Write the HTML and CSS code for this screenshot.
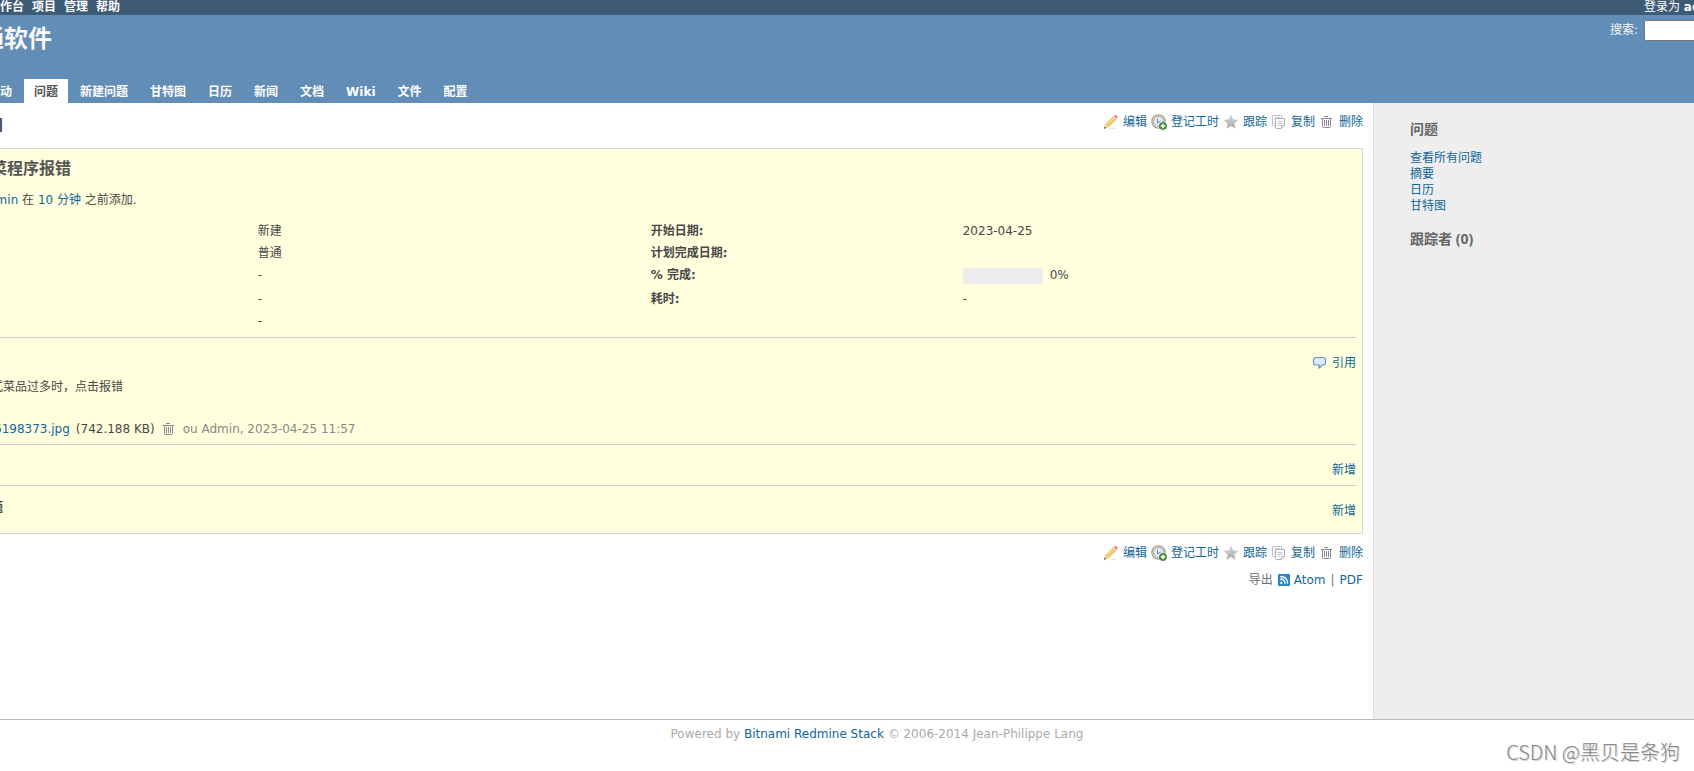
FILE: index.html
```
<!DOCTYPE html>
<html lang="zh-CN">
<head>
<meta charset="utf-8">
<title>Redmine</title>
<link rel="stylesheet" href="styles.css">
</head>
<body>
<svg class="defs" aria-hidden="true">
  <defs>
    <linearGradient id="pen" x1="0" y1="0" x2="1" y2="1"><stop offset="0.3" stop-color="#fff0a0"/><stop offset="0.7" stop-color="#e8ad3c"/></linearGradient>
    <linearGradient id="grey" x1="0" y1="0" x2="0" y2="1"><stop offset="0" stop-color="#d8d8d8"/><stop offset="1" stop-color="#a8a8a8"/></linearGradient>
    <symbol id="i-edit" viewBox="0 0 16 16">
      <path d="M4 15 12 13.500 14 14.500 8 15.500z" fill="#e4e4e4"/>
      <path d="M2.600 10.200 10.300 2.500 13.100 5.300 5.200 13 1.500 14.300z" fill="url(#pen)" stroke="#d0a352" stroke-width=".6"/>
      <path d="M10.900 2.100 11.900 1.200Q12.600.7 13.300 1.300L14.300 2.400Q14.900 3.100 14.400 3.800L13.500 4.700z" fill="#ee6f70"/>
      <path d="M10 3 10.900 2.100 13.500 4.700 12.600 5.600z" fill="#d8d8d8"/>
      <path d="M2.500 10.700 4.800 13 1.400 14.400z" fill="#f3d9b4"/>
      <path d="M1.800 12.600 3 13.900 1 14.800z" fill="#444"/>
    </symbol>
    <symbol id="i-time" viewBox="0 0 16 16">
      <circle cx="7.500" cy="7.500" r="6.600" fill="#fff" stroke="#b39a76" stroke-width="1.300"/>
      <circle cx="7.500" cy="7.500" r="4.900" fill="#e8f1fa" stroke="#88a3c0" stroke-width="1"/>
      <path d="M6.500 4.800V9L9.700 7" fill="none" stroke="#6d819a" stroke-width="1"/>
      <circle cx="12" cy="12" r="3.600" fill="#4b9838" stroke="#2f7124" stroke-width=".7"/>
      <path d="M12 9.800V14.200M9.800 12H14.200" stroke="#fff" stroke-width="1.400"/>
    </symbol>
    <symbol id="i-star" viewBox="0 0 16 16">
      <path d="M8 1.500 9.900 5.800 14.700 6.200 11.100 9.400 12.200 14.200 8 11.700 3.800 14.200 4.900 9.400 1.300 6.200 6.100 5.800z" fill="url(#grey)" stroke="#bdbdbd" stroke-width=".6"/>
    </symbol>
    <symbol id="i-copy" viewBox="0 0 16 16">
      <path d="M4.500 11.500H2.500Q1.500 11.500 1.500 10.500V2.500Q1.500 1.500 2.500 1.500H9.500Q10.500 1.500 10.500 2.500V4" fill="#fff" stroke="#bcbcc2"/>
      <path d="M3 3.500H9M3 5.500H5M3 7.500H5M3 9.500H5" stroke="#d4d4da"/>
      <path d="M4.500 4.500H13.500V11.500L10.500 14.500H5.500Q4.500 14.500 4.500 13.500z" fill="#fff" stroke="#b0b0b8"/>
      <path d="M6.500 7.500H11.500M6.500 9.500H11.500M6.500 11.500H9.500M10.500 14V11.500H13" fill="none" stroke="#c4c4ca"/>
    </symbol>
    <symbol id="i-trash" viewBox="0 0 16 16">
      <path d="M5 2.500H9M2 4.500H13M3.500 5V12.500Q3.500 13.500 4.500 13.500H10.500Q11.500 13.500 11.500 12.500V5" fill="none" stroke="#8c8996"/>
      <path d="M5.500 6V12M7.500 6V12M9.500 6V12" stroke="#8c8996"/>
    </symbol>
    <symbol id="i-quote" viewBox="0 0 16 16">
      <path d="M4 2.500H11Q13.500 2.500 13.500 5V7.500Q13.500 10 11 10H9.800Q9.500 12.300 6.800 12.800 7.700 11.300 7.300 10H4Q1.500 10 1.500 7.500V5Q1.500 2.500 4 2.500z" fill="#dcebff" stroke="#6d8fc4" stroke-width="1.200"/>
    </symbol>
    <symbol id="i-feed" viewBox="0 0 12 12">
      <rect width="12" height="12" rx="1" fill="#2b86c9"/>
      <circle cx="3.300" cy="8.700" r="1.200" fill="#fff"/>
      <path d="M2.200 5Q7 5 7 9.800M2.200 2.500Q9.600 2.500 9.600 9.800" fill="none" stroke="#fff" stroke-width="1.300"/>
    </symbol>
  </defs>
</svg>

<nav class="top-menu">
  <ul class="top-links">
    <li><a href="#">作台</a></li><li><a href="#">项目</a></li><li><a href="#">管理</a></li><li><a href="#">帮助</a></li>
  </ul>
  <div class="account">登录为 <a href="#">admin</a></div>
</nav>

<header class="header">
  <div class="header-row">
    <h1>通软件</h1>
    <form class="search"><label for="q">搜索:</label><input id="q" type="text"></form>
  </div>
  <nav>
    <ul class="tabs">
      <li><a href="#">活动</a></li><li><a class="selected" href="#">问题</a></li><li><a href="#">新建问题</a></li><li><a href="#">甘特图</a></li><li><a href="#">日历</a></li><li><a href="#">新闻</a></li><li><a href="#">文档</a></li><li><a href="#">Wiki</a></li><li><a href="#">文件</a></li><li><a href="#">配置</a></li>
    </ul>
  </nav>
</header>

<div class="main">
  <main class="content">
    <div class="heading">
      <h2>H</h2>
      <div class="contextual">
        <a href="#"><svg><use href="#i-edit"/></svg>编辑</a>
        <a href="#"><svg><use href="#i-time"/></svg>登记工时</a>
        <a href="#"><svg><use href="#i-star"/></svg>跟踪</a>
        <a href="#"><svg><use href="#i-copy"/></svg>复制</a>
        <a href="#"><svg><use href="#i-trash"/></svg>删除</a>
      </div>
    </div>

    <article class="issue">
      <h3 class="subject">菜程序报错</h3>
      <p class="author"><a href="#">Admin</a> 在 <a href="#">10 分钟</a> 之前添加.</p>
      <table class="attributes">
        <tr><th></th><td>新建</td><th>开始日期:</th><td>2023-04-25</td></tr>
        <tr><th></th><td>普通</td><th>计划完成日期:</th><td></td></tr>
        <tr class="tall"><th></th><td>-</td><th>% 完成:</th><td><div class="done"><span class="bar"></span>0%</div></td></tr>
        <tr><th></th><td>-</td><th>耗时:</th><td>-</td></tr>
        <tr><th></th><td>-</td><th></th><td></td></tr>
      </table>
      <section class="description">
        <div class="contextual"><a href="#"><svg><use href="#i-quote"/></svg>引用</a></div>
        <p class="text">式菜品过多时，点击报错</p>
        <p class="attachment"><a href="#">6198373.jpg</a> (742.188 KB) <a class="remove" href="#" aria-label="删除"><svg><use href="#i-trash"/></svg></a> <span class="by">ou Admin, 2023-04-25 11:57</span></p>
      </section>
      <section class="tasks"><div class="contextual"><a href="#">新增</a></div></section>
      <section class="relations"><strong>题</strong><div class="contextual"><a href="#">新增</a></div></section>
    </article>

    <div class="contextual below">
      <a href="#"><svg><use href="#i-edit"/></svg>编辑</a>
      <a href="#"><svg><use href="#i-time"/></svg>登记工时</a>
      <a href="#"><svg><use href="#i-star"/></svg>跟踪</a>
      <a href="#"><svg><use href="#i-copy"/></svg>复制</a>
      <a href="#"><svg><use href="#i-trash"/></svg>删除</a>
    </div>
    <p class="formats">导出 <a class="atom" href="#"><svg><use href="#i-feed"/></svg>Atom</a> <span class="sep">|</span> <a href="#">PDF</a></p>
  </main>

  <aside class="sidebar">
    <h3>问题</h3>
    <ul>
      <li><a href="#">查看所有问题</a></li><li><a href="#">摘要</a></li><li><a href="#">日历</a></li><li><a href="#">甘特图</a></li>
    </ul>
    <h3>跟踪者 (0)</h3>
  </aside>
</div>

<footer class="footer">Powered by <a href="#">Bitnami Redmine Stack</a> © 2006-2014 Jean-Philippe Lang</footer>
<div class="watermark">CSDN @黑贝是条狗</div>
</body>
</html>
```
FILE: styles.css
```
* { box-sizing: border-box; }
body {
  margin: 0;
  min-height: 100vh;
  display: flex;
  flex-direction: column;
  overflow: hidden;
  background: #fff;
  color: #484848;
  font: 12px/16px "DejaVu Sans", "Noto Sans CJK SC", sans-serif;
}
h1, h2, h3, p, ul { margin: 0; padding: 0; }
ul { list-style: none; }
a { color: #169; text-decoration: none; }
.defs { position: absolute; width: 0; height: 0; }

.top-menu {
  display: flex;
  justify-content: space-between;
  height: 15px;
  line-height: 14px;
  background: #3e5b76;
  color: #fff;
}
.top-menu a { color: #fff; font-weight: bold; }
.top-links { display: flex; gap: 8px; }
.account { width: 50px; overflow: hidden; white-space: nowrap; }

.header {
  display: flex;
  flex-direction: column;
  justify-content: space-between;
  height: 88px;
  background: #628db6;
  color: #f8f8f8;
}
.header-row { display: flex; justify-content: space-between; overflow: hidden; }
h1 { margin-left: -20px; padding-top: 8px; font-size: 24px; line-height: 32px; }
.search { display: flex; gap: 6px; height: 21px; margin: 5px -100px 0 0; line-height: 20px; }
.search input { width: 150px; padding: 1px 2px; border: 1px solid #767676; border-radius: 2px; background: #fff; }
.tabs { display: flex; gap: 2px; margin-left: -22px; }
.tabs a { display: block; height: 24px; padding: 1px 10px 0; line-height: 24px; color: #fff; font-weight: bold; }
.tabs .selected { background: #fff; color: #555; }

.main { display: flex; flex: 1; }
.content { flex: 1; min-width: 0; padding: 10px 10px 0 0; }
.heading { display: flex; justify-content: space-between; height: 35px; }
h2 { margin-left: -13px; font-size: 20px; line-height: 24px; color: #555; }
.contextual { display: flex; justify-content: flex-end; gap: 4px; line-height: 18px; height: 18px; }
.contextual a { display: flex; align-items: center; gap: 4px; }
.contextual svg { width: 16px; height: 16px; }

.issue { padding: 9px 6px 0 0; border: 1px solid #d7d7d7; border-left: 0; background: #ffffdd; }
.subject { margin-left: -9px; font-size: 16px; line-height: 22px; color: #555; }
.author { margin: 12px 0 12px -20px; }
.attributes { width: 100%; table-layout: fixed; border-collapse: collapse; line-height: 22px; }
.attributes th, .attributes td { width: 29%; height: 22px; padding: 0; text-align: left; vertical-align: top; }
.attributes th { width: 23%; }
.attributes th:first-child { width: 19%; }
.attributes .tall td { height: 24px; }
.done { display: flex; gap: 7px; }
.bar { width: 80px; height: 16px; margin-top: 4px; background: #ededed; }

.description { margin-top: 5px; padding-top: 16px; border-top: 1px solid #ccc; height: 107px; }
.text { margin: 7px 0 0 -9px; }
.attachment { margin: 26px 0 0 -6px; display: flex; align-items: center; gap: 6px; }
.attachment svg { display: block; width: 16px; height: 16px; }
.by { color: #888; }
.tasks { height: 41px; padding-top: 16px; border-top: 1px solid #ccc; }
.relations { display: flex; justify-content: space-between; height: 48px; padding-top: 14px; border-top: 1px solid #ccc; }
.relations strong { margin-left: -9px; }
.relations .contextual { margin-top: 2px; }
.below { margin-top: 10px; }
.formats { display: flex; justify-content: flex-end; gap: 5px; margin-top: 10px; color: #707070; }
.atom { display: flex; align-items: center; gap: 4px; }
.atom svg { width: 12px; height: 12px; }

.sidebar { flex: 0 0 321px; padding: 17px 0 0 36px; border-left: 1px solid #ddd; background: #eee; }
.sidebar h3 { font: bold 14px/18px "Open Sans", "Noto Sans CJK SC", sans-serif; color: #666; }
.sidebar ul { margin: 12px 0 16px; }

.footer { height: 52px; padding: 6px 0 0 60px; border-top: 1px solid #bbb; color: #aaa; text-align: center; }
.watermark {
  position: absolute;
  right: 14px;
  bottom: 6px;
  font: 300 20px/26px "Noto Sans CJK SC", sans-serif;
  color: #888;
  text-shadow: 1px 1px 1px #ccc;
}
```
